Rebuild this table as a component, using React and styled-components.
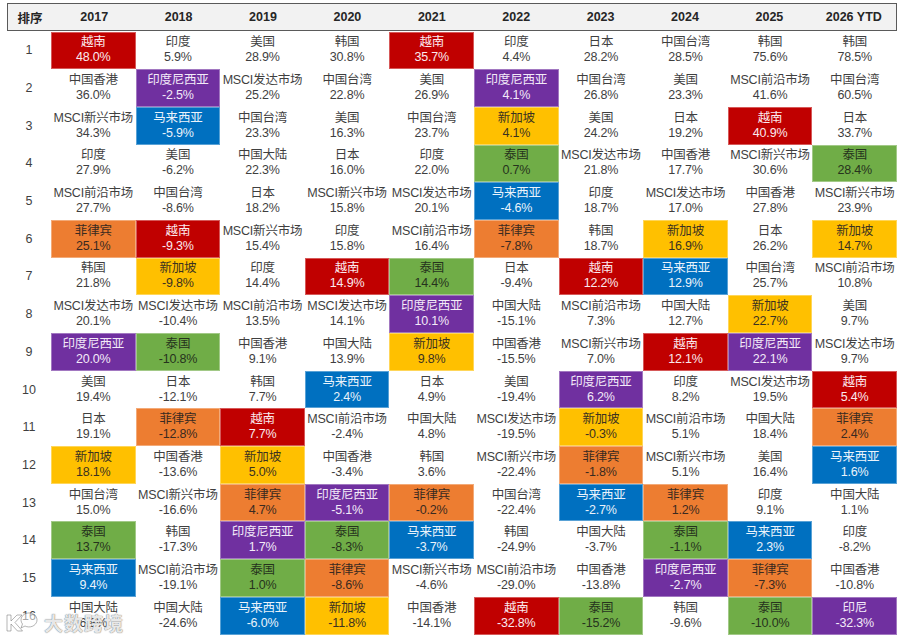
import React from "react";
import styled, { createGlobalStyle } from "styled-components";

const GlobalStyle = createGlobalStyle`
  html, body { margin: 0; padding: 0; background: #ffffff; }
  body { font-family: "Liberation Sans", "Noto Sans CJK SC", Arial, sans-serif; }
`;

const YEARS = ["2017", "2018", "2019", "2020", "2021", "2022", "2023", "2024", "2025", "2026 YTD"];

const ROWS = [
  ["越南|48.0%", "印度|5.9%", "美国|28.9%", "韩国|30.8%", "越南|35.7%", "印度|4.4%", "日本|28.2%", "中国台湾|28.5%", "韩国|75.6%", "韩国|78.5%"],
  ["中国香港|36.0%", "印度尼西亚|-2.5%", "MSCI发达市场|25.2%", "中国台湾|22.8%", "美国|26.9%", "印度尼西亚|4.1%", "中国台湾|26.8%", "美国|23.3%", "MSCI前沿市场|41.6%", "中国台湾|60.5%"],
  ["MSCI新兴市场|34.3%", "马来西亚|-5.9%", "中国台湾|23.3%", "美国|16.3%", "中国台湾|23.7%", "新加坡|4.1%", "美国|24.2%", "日本|19.2%", "越南|40.9%", "日本|33.7%"],
  ["印度|27.9%", "美国|-6.2%", "中国大陆|22.3%", "日本|16.0%", "印度|22.0%", "泰国|0.7%", "MSCI发达市场|21.8%", "中国香港|17.7%", "MSCI新兴市场|30.6%", "泰国|28.4%"],
  ["MSCI前沿市场|27.7%", "中国台湾|-8.6%", "日本|18.2%", "MSCI新兴市场|15.8%", "MSCI发达市场|20.1%", "马来西亚|-4.6%", "印度|18.7%", "MSCI发达市场|17.0%", "中国香港|27.8%", "MSCI新兴市场|23.9%"],
  ["菲律宾|25.1%", "越南|-9.3%", "MSCI新兴市场|15.4%", "印度|15.8%", "MSCI前沿市场|16.4%", "菲律宾|-7.8%", "韩国|18.7%", "新加坡|16.9%", "日本|26.2%", "新加坡|14.7%"],
  ["韩国|21.8%", "新加坡|-9.8%", "印度|14.4%", "越南|14.9%", "泰国|14.4%", "日本|-9.4%", "越南|12.2%", "马来西亚|12.9%", "中国台湾|25.7%", "MSCI前沿市场|10.8%"],
  ["MSCI发达市场|20.1%", "MSCI发达市场|-10.4%", "MSCI前沿市场|13.5%", "MSCI发达市场|14.1%", "印度尼西亚|10.1%", "中国大陆|-15.1%", "MSCI前沿市场|7.3%", "中国大陆|12.7%", "新加坡|22.7%", "美国|9.7%"],
  ["印度尼西亚|20.0%", "泰国|-10.8%", "中国香港|9.1%", "中国大陆|13.9%", "新加坡|9.8%", "中国香港|-15.5%", "MSCI新兴市场|7.0%", "越南|12.1%", "印度尼西亚|22.1%", "MSCI发达市场|9.7%"],
  ["美国|19.4%", "日本|-12.1%", "韩国|7.7%", "马来西亚|2.4%", "日本|4.9%", "美国|-19.4%", "印度尼西亚|6.2%", "印度|8.2%", "MSCI发达市场|19.5%", "越南|5.4%"],
  ["日本|19.1%", "菲律宾|-12.8%", "越南|7.7%", "MSCI前沿市场|-2.4%", "中国大陆|4.8%", "MSCI发达市场|-19.5%", "新加坡|-0.3%", "MSCI前沿市场|5.1%", "中国大陆|18.4%", "菲律宾|2.4%"],
  ["新加坡|18.1%", "中国香港|-13.6%", "新加坡|5.0%", "中国香港|-3.4%", "韩国|3.6%", "MSCI新兴市场|-22.4%", "菲律宾|-1.8%", "MSCI新兴市场|5.1%", "美国|16.4%", "马来西亚|1.6%"],
  ["中国台湾|15.0%", "MSCI新兴市场|-16.6%", "菲律宾|4.7%", "印度尼西亚|-5.1%", "菲律宾|-0.2%", "中国台湾|-22.4%", "马来西亚|-2.7%", "菲律宾|1.2%", "印度|9.1%", "中国大陆|1.1%"],
  ["泰国|13.7%", "韩国|-17.3%", "印度尼西亚|1.7%", "泰国|-8.3%", "马来西亚|-3.7%", "韩国|-24.9%", "中国大陆|-3.7%", "泰国|-1.1%", "马来西亚|2.3%", "印度|-8.2%"],
  ["马来西亚|9.4%", "MSCI前沿市场|-19.1%", "泰国|1.0%", "菲律宾|-8.6%", "MSCI新兴市场|-4.6%", "MSCI前沿市场|-29.0%", "中国香港|-13.8%", "印度尼西亚|-2.7%", "菲律宾|-7.3%", "中国香港|-10.8%"],
  ["中国大陆|6.8%", "中国大陆|-24.6%", "马来西亚|-6.0%", "新加坡|-11.8%", "中国香港|-14.1%", "越南|-32.8%", "泰国|-15.2%", "韩国|-9.6%", "泰国|-10.0%", "印尼|-32.3%"],
];

const TONES = {
  越南: "red",
  印度尼西亚: "purple",
  印尼: "purple",
  马来西亚: "blue",
  菲律宾: "orange",
  泰国: "green",
  新加坡: "yellow",
};

const FILLS = {
  red: { bg: "#c00000", fg: "#fbe9ee" },
  purple: { bg: "#7030a0", fg: "#f3eaf8" },
  blue: { bg: "#0070c0", fg: "#eaf3fb" },
  orange: { bg: "#ed7d31", fg: "#3a2a20" },
  green: { bg: "#70ad47", fg: "#26331d" },
  yellow: { bg: "#ffc000", fg: "#3b3220" },
  none: { bg: "transparent", fg: "#3f3f3f" },
};

const Page = styled.div`
  position: relative;
  width: 900px;
  height: 638px;
  padding: 3px 3px 0 7px;
  box-sizing: border-box;
  overflow: hidden;
  background: #ffffff;
`;

const COLS = "44px repeat(10, 1fr)";

const HeaderRow = styled.div`
  display: grid;
  grid-template-columns: ${COLS};
  height: 28px;
  box-sizing: border-box;
  border: 1.5px solid #5a5a5a;
  background: #f2f2f2;
`;

const HeadCell = styled.div`
  display: flex;
  align-items: center;
  justify-content: center;
  font-weight: 700;
  font-size: 12.5px;
  color: #262626;
`;

const Body = styled.div`
  display: grid;
  grid-template-columns: ${COLS};
  grid-auto-rows: 37.7px;
  margin-top: 0.5px;
`;

const RankCell = styled.div`
  display: flex;
  align-items: center;
  justify-content: center;
  font-size: 12.5px;
  color: #3f3f3f;
`;

const Cell = styled.div`
  display: flex;
  flex-direction: column;
  align-items: center;
  justify-content: center;
  font-size: 12.5px;
  line-height: 15px;
  white-space: nowrap;
  letter-spacing: -0.2px;
  background: ${(p) => FILLS[p.$tone].bg};
  color: ${(p) => FILLS[p.$tone].fg};
  box-shadow: ${(p) => (p.$tone === "none" ? "none" : "inset 0 0 0 1px rgba(255,255,255,0.35)")};
`;

const Name = styled.span``;
const Value = styled.span``;

const Watermark = styled.div`
  position: absolute;
  left: 4px;
  bottom: 2px;
  display: flex;
  align-items: center;
  gap: 4px;
  pointer-events: none;
`;

const WatermarkText = styled.span`
  font-family: "Noto Sans CJK SC", sans-serif;
  font-size: 19px;
  font-weight: 700;
  letter-spacing: 1px;
  color: rgba(255, 255, 255, 0.85);
  text-shadow: 0 0 1px rgba(90, 90, 90, 0.7), 0 0 1px rgba(90, 90, 90, 0.7);
`;

function Logo() {
  return (
    <svg width="36" height="24" viewBox="0 0 36 24">
      <g fill="rgba(255,255,255,0.85)" stroke="rgba(100,100,100,0.6)" strokeWidth="0.8">
        <path d="M3 4 h4 v6 l6 -6 h5 l-7 7.5 l7.5 8.5 h-5 l-6.5 -7 v7 h-4 z" />
        <path d="M24 2 a8 7 0 1 1 -3 13 l-4 2 l1.5 -4 a8 7 0 0 1 5.5 -11 z" fill="rgba(255,255,255,0.55)" />
      </g>
    </svg>
  );
}

export default function App() {
  return (
    <>
      <GlobalStyle />
      <Page>
        <HeaderRow>
          <HeadCell>排序</HeadCell>
          {YEARS.map((y) => (
            <HeadCell key={y}>{y}</HeadCell>
          ))}
        </HeaderRow>
        <Body>
          {ROWS.map((row, i) => (
            <React.Fragment key={i}>
              <RankCell>{i + 1}</RankCell>
              {row.map((entry, j) => {
                const [name, value] = entry.split("|");
                const tone = TONES[name] || "none";
                return (
                  <Cell key={j} $tone={tone}>
                    <Name>{name}</Name>
                    <Value>{value}</Value>
                  </Cell>
                );
              })}
            </React.Fragment>
          ))}
        </Body>
        <Watermark>
          <Logo />
          <WatermarkText>大数跨境</WatermarkText>
        </Watermark>
      </Page>
    </>
  );
}
